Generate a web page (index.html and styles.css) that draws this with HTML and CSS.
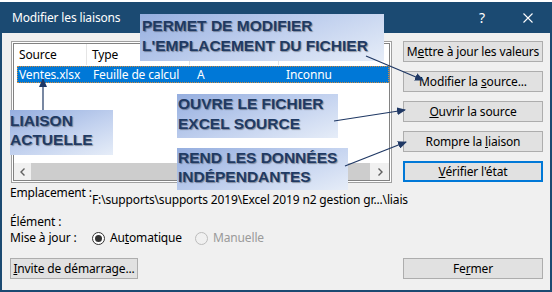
FILE: index.html
```html
<!DOCTYPE html>
<html lang="fr">
<head>
    <meta charset="UTF-8">
    <title>Modifier les liaisons</title>
    <link rel="stylesheet" href="styles.css">
</head>
<body>
    <div class="window">
        <div class="titlebar">
            <span class="title">Modifier les liaisons</span>
            <span class="help">?</span>
            <svg class="close" width="10" height="10" viewBox="0 0 10 10">
                <path d="M0.5 0.5 L9.5 9.5 M9.5 0.5 L0.5 9.5" stroke="#fff" stroke-width="1.1"/>
            </svg>
        </div>

        <div class="content">
            <div class="top">
                <div class="links">
                    <div class="list">
                        <div class="row head">
                            <span class="c1">Source</span>
                            <span class="c2">Type</span>
                            <span class="c3"></span>
                            <span class="c4"></span>
                        </div>
                        <div class="row selected">
                            <span class="c1">Ventes.xlsx</span>
                            <span class="c2">Feuille de calcul</span>
                            <span class="c3">A</span>
                            <span class="c4">Inconnu</span>
                        </div>
                        <div class="spacer"></div>
                        <div class="hscroll">
                            <span class="scroll-btn">
                                <svg width="5" height="8" viewBox="0 0 5 8"><polyline points="4.5,0.5 1,4 4.5,7.5" fill="none" stroke="#606060" stroke-width="1.4"/></svg>
                            </span>
                            <span class="thumb"></span>
                            <span class="scroll-btn">
                                <svg width="5" height="8" viewBox="0 0 5 8"><polyline points="0.5,0.5 4,4 0.5,7.5" fill="none" stroke="#606060" stroke-width="1.4"/></svg>
                            </span>
                        </div>
                    </div>
                </div>

                <div class="actions">
                    <button class="btn">M<u>e</u>ttre à jour les valeurs</button>
                    <button class="btn">Modifier la <u>s</u>ource...</button>
                    <button class="btn"><u>O</u>uvrir la source</button>
                    <button class="btn">Rompre la <u>l</u>iaison</button>
                    <button class="btn focused"><u>V</u>érifier l'état</button>
                </div>
            </div>

            <div class="info">
                <span class="label">Emplacement :</span>
                <span class="path">F:\supports\supports 2019\Excel 2019 n2 gestion gr...\liais</span>
                <span class="label gap">Élément :</span>
                <span class="gap"></span>
                <span class="label">Mise à jour :</span>
                <div class="radios">
                    <label class="radio"><span class="dot checked"></span><span>Au<u>t</u>omatique</span></label>
                    <label class="radio disabled"><span class="dot"></span><span>Manuelle</span></label>
                </div>
            </div>

            <div class="bottom">
                <button class="btn invite"><u>I</u>nvite de démarrage...</button>
                <button class="btn close-btn">Fe<u>r</u>mer</button>
            </div>
        </div>

        <div class="callout c-modify">PERMET DE MODIFIER<br>L'EMPLACEMENT DU FICHIER</div>
        <div class="callout c-open">OUVRE LE FICHIER<br>EXCEL SOURCE</div>
        <div class="callout c-break">REND LES DONNÉES<br>INDÉPENDANTES</div>
        <div class="callout c-current">LIAISON<br>ACTUELLE</div>

        <svg class="arrows" width="552" height="292" viewBox="0 0 552 292">
            <defs>
                <marker id="head" markerWidth="9" markerHeight="8" refX="8" refY="4" orient="auto" markerUnits="userSpaceOnUse">
                    <path d="M0 0 L9 4 L0 8 Z" fill="#1f3864"/>
                </marker>
            </defs>
            <line x1="366" y1="56" x2="423" y2="80" stroke="#1f3864" stroke-width="1.2" marker-end="url(#head)"/>
            <line x1="334" y1="121" x2="405" y2="110" stroke="#1f3864" stroke-width="1.2" marker-end="url(#head)"/>
            <line x1="345" y1="166" x2="406" y2="142" stroke="#1f3864" stroke-width="1.2" marker-end="url(#head)"/>
            <line x1="43" y1="110" x2="43" y2="79" stroke="#1f3864" stroke-width="1.2" marker-end="url(#head)"/>
        </svg>
    </div>
</body>
</html>
```

FILE: styles.css
```css
body {
    margin: 0;
    background: #fff;
    font-family: "Noto Sans", sans-serif;
    font-size: 12px;
    letter-spacing: -0.15px;
    color: #000;
}
.window {
    position: relative;
    width: 552px;
    height: 292px;
    padding-top: 2px;
    box-sizing: border-box;
    display: flex;
    flex-direction: column;
}
.titlebar {
    height: 31px;
    flex-shrink: 0;
    background: #1b4a72;
    color: #fff;
    display: flex;
    align-items: center;
    padding: 0 19px 0 12px;
}
.title {
    flex: 1;
}
.help {
    font-size: 14px;
    margin-right: 38px;
}
.content {
    flex: 1;
    background: #f0f0f0;
    border: 2px solid #1b4a72;
    border-top: 0;
    padding: 8px 7px 11px 9px;
    display: flex;
    flex-direction: column;
}
.top {
    display: flex;
    gap: 11px;
    height: 142px;
}
.links {
    width: 381px;
    box-sizing: border-box;
    border: 1px solid #a0a0a0;
    padding: 1px;
    background: #fff;
}
.list {
    height: 100%;
    box-sizing: border-box;
    border: 1px solid #828282;
    display: flex;
    flex-direction: column;
}
.row {
    display: flex;
    white-space: nowrap;
}
.head {
    height: 21px;
    line-height: 21px;
}
.head span {
    box-sizing: border-box;
    padding-left: 5px;
    border-right: 1px solid #e5e5e5;
}
.head .c1 { width: 73px; }
.head .c2 { width: 103px; }
.head .c3 { width: 89px; }
.head .c4 { flex: 1; border-right: 0; }
.selected {
    margin: 1px 0 0 3px;
    height: 17px;
    line-height: 17px;
    background: #0078d7;
    color: #fff;
    outline: 1px dotted #d08a3c;
    outline-offset: -1px;
}
.selected span {
    padding-left: 2px;
    box-sizing: border-box;
}
.selected .c1 { width: 74px; }
.selected .c2 { width: 104px; }
.selected .c3 { width: 89px; }
.selected .c4 { flex: 1; }
.spacer {
    flex: 1;
}
.hscroll {
    height: 17px;
    display: flex;
    background: #f0f0f0;
}
.scroll-btn {
    width: 17px;
    display: flex;
    align-items: center;
    justify-content: center;
}
.thumb {
    flex: 1;
    background: #cdcdcd;
    margin-right: 2px;
}
.actions {
    width: 140px;
    display: flex;
    flex-direction: column;
    gap: 9px;
}
.btn {
    height: 21px;
    box-sizing: border-box;
    border: 1px solid #adadad;
    background: #e1e1e1;
    font-family: inherit;
    font-size: 12px;
    letter-spacing: -0.15px;
    color: #000;
    padding: 0;
    white-space: nowrap;
}
.btn.focused {
    border: 2px solid #0078d7;
}
.info {
    display: grid;
    grid-template-columns: 81px 1fr;
    margin-top: 2px;
    line-height: 16px;
    white-space: nowrap;
}
.label {
    margin-left: -1px;
}
.path {
    padding-top: 7px;
}
.gap {
    margin-top: 6px;
}
.radios {
    display: flex;
    gap: 13px;
}
.radio {
    display: flex;
    align-items: center;
    gap: 5px;
}
.dot {
    width: 13px;
    height: 13px;
    box-sizing: border-box;
    border-radius: 50%;
    border: 1px solid #bcbcbc;
    background: #f0f0f0;
    display: flex;
    align-items: center;
    justify-content: center;
}
.dot.checked {
    border-color: #333;
    background: #fff;
}
.dot.checked::after {
    content: "";
    width: 7px;
    height: 7px;
    border-radius: 50%;
    background: #333;
}
.disabled {
    color: #9a9a9a;
}
.bottom {
    margin-top: auto;
    display: flex;
    justify-content: space-between;
    margin-left: -1px;
}
.invite {
    width: 128px;
}
.close-btn {
    width: 140px;
}
.callout {
    position: absolute;
    box-sizing: border-box;
    font-family: "Liberation Sans", Arial, sans-serif;
    font-weight: bold;
    font-size: 15.5px;
    line-height: 20px;
    letter-spacing: 0;
    color: #1f3a63;
    text-shadow: 1px 1px 1px rgba(0, 0, 0, 0.35);
    white-space: nowrap;
    background: linear-gradient(160deg, #95aedf 0%, #c3d2ef 55%, #e6edf8 100%);
}
.c-modify {
    left: 140px;
    top: 14px;
    width: 244px;
    height: 47px;
    padding: 2px 0 0 2px;
}
.c-open {
    left: 177px;
    top: 94px;
    width: 161px;
    height: 44px;
    padding-left: 1px;
}
.c-break {
    left: 177px;
    top: 148px;
    width: 171px;
    height: 42px;
    padding-left: 1px;
    line-height: 19px;
}
.c-current {
    left: 10px;
    top: 110px;
    width: 103px;
    height: 45px;
    padding-top: 1px;
    line-height: 19px;
}
.arrows {
    position: absolute;
    left: 0;
    top: 0;
    pointer-events: none;
}
```
